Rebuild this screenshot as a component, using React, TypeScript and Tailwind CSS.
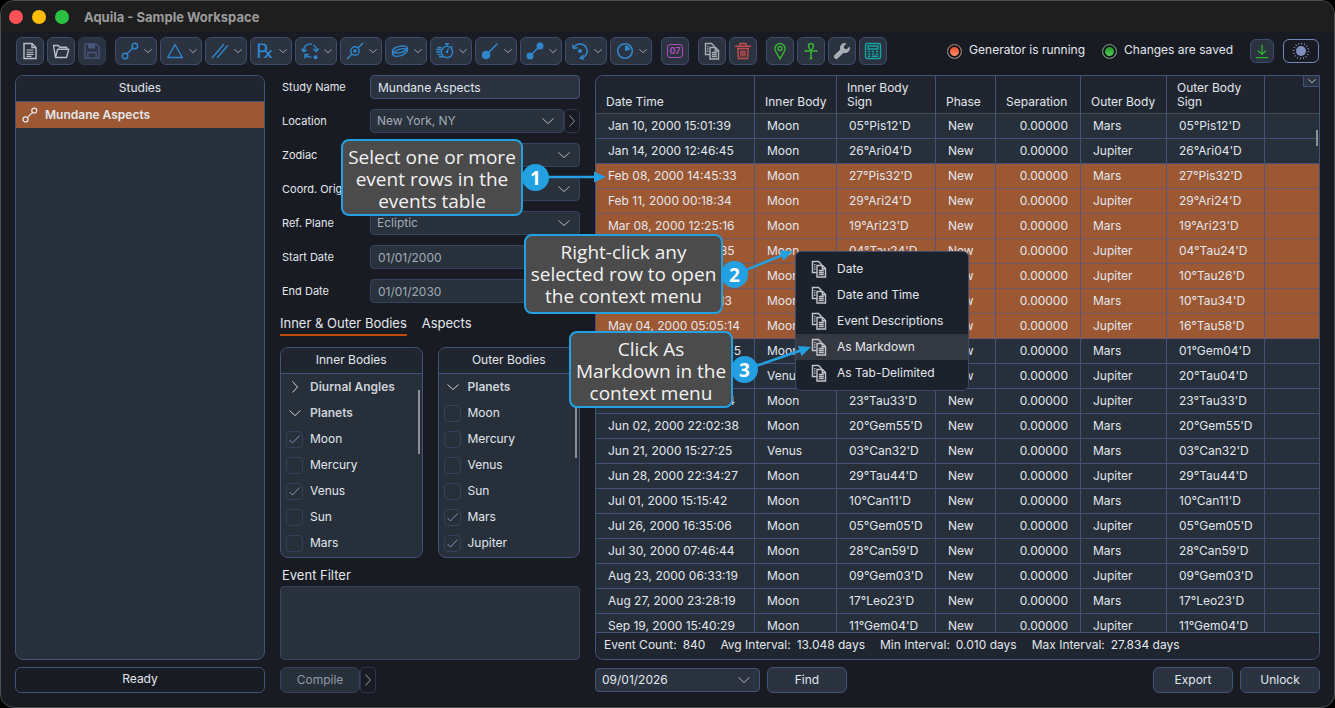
import { useState, type ReactNode } from "react";
import { clsx } from "clsx";

const dropdownTools = [
  "Aspects",
  "Figures",
  "Parallels",
  "Retrogrades",
  "Returns",
  "Stations",
  "Orbits",
  "Timing",
  "Ingress",
  "Conjunctions",
  "Rotation",
  "Phases",
] as const;

type EventRow = [date: string, inner: string, sign: string, outer: string, selected?: boolean];

const events: EventRow[] = [
  ["Jan 10, 2000 15:01:39", "Moon", "05°Pis12'D", "Mars"],
  ["Jan 14, 2000 12:46:45", "Moon", "26°Ari04'D", "Jupiter"],
  ["Feb 08, 2000 14:45:33", "Moon", "27°Pis32'D", "Mars", true],
  ["Feb 11, 2000 00:18:34", "Moon", "29°Ari24'D", "Jupiter", true],
  ["Mar 08, 2000 12:25:16", "Moon", "19°Ari23'D", "Mars", true],
  ["Mar 09, 2000 16:18:35", "Moon", "04°Tau24'D", "Jupiter", true],
  ["Apr 06, 2000 10:11:11", "Moon", "10°Tau26'D", "Jupiter", true],
  ["Apr 06, 2000 10:37:13", "Moon", "10°Tau34'D", "Mars", true],
  ["May 04, 2000 05:05:14", "Moon", "16°Tau58'D", "Jupiter", true],
  ["May 05, 2000 07:45:45", "Moon", "01°Gem04'D", "Mars"],
  ["May 17, 2000 22:31:19", "Venus", "20°Tau04'D", "Jupiter"],
  ["Jun 01, 2000 00:04:14", "Moon", "23°Tau33'D", "Jupiter"],
  ["Jun 02, 2000 22:02:38", "Moon", "20°Gem55'D", "Mars"],
  ["Jun 21, 2000 15:27:25", "Venus", "03°Can32'D", "Mars"],
  ["Jun 28, 2000 22:34:27", "Moon", "29°Tau44'D", "Jupiter"],
  ["Jul 01, 2000 15:15:42", "Moon", "10°Can11'D", "Mars"],
  ["Jul 26, 2000 16:35:06", "Moon", "05°Gem05'D", "Jupiter"],
  ["Jul 30, 2000 07:46:44", "Moon", "28°Can59'D", "Mars"],
  ["Aug 23, 2000 06:33:19", "Moon", "09°Gem03'D", "Jupiter"],
  ["Aug 27, 2000 23:28:19", "Moon", "17°Leo23'D", "Mars"],
  ["Sep 19, 2000 15:40:29", "Moon", "11°Gem04'D", "Jupiter"],
];

const stats = [
  ["Event Count:", "840"],
  ["Avg Interval:", "13.048 days"],
  ["Min Interval:", "0.010 days"],
  ["Max Interval:", "27.834 days"],
];

const menuItems = ["Date", "Date and Time", "Event Descriptions", "As Markdown", "As Tab-Delimited"];

export default function App() {
  const [tab, setTab] = useState("Inner & Outer Bodies");

  return (
    <div className="relative h-screen min-h-[640px] bg-black font-['Inter',sans-serif] text-[12px] leading-4 text-[#e3e7ed]">
      <div className="flex h-full flex-col overflow-hidden rounded-[14px] border border-[#4d4f52] bg-[#181b22]">
        <header className="flex h-[31px] shrink-0 items-center gap-[9px] bg-[#1e1e1e] px-2">
          <span className="h-3.5 w-3.5 rounded-full bg-[#ff5257]" />
          <span className="h-3.5 w-3.5 rounded-full bg-[#fdbc08]" />
          <span className="h-3.5 w-3.5 rounded-full bg-[#2bc145]" />
          <h1 className="ml-1.5 text-[13px] font-bold text-[#9b9b9b]">Aquila - Sample Workspace</h1>
        </header>

        <Toolbar />

        <main className="flex min-h-0 flex-1 gap-[15px] px-3.5 pb-3.5">
          <section className="flex w-[250px] shrink-0 flex-col gap-[7px]">
            <Panel title="Studies" className="flex-1">
              <button
                type="button"
                className="flex h-[26px] w-full items-center gap-[7px] bg-[#9c5733] pl-1.5 font-semibold"
              >
                <Icon name="Aspects" className="h-4 w-4" />
                Mundane Aspects
              </button>
            </Panel>
            <div
              role="status"
              className="flex h-[26px] items-center justify-center rounded-md border border-[#43527a] pb-0.5"
            >
              Ready
            </div>
          </section>

          <section className="flex w-[300px] shrink-0 flex-col">
            <div className="flex flex-col gap-2.5">
              <Field label="Study Name" id="study-name">
                <input
                  id="study-name"
                  defaultValue="Mundane Aspects"
                  className="h-6 w-full rounded-sm border border-[#43527a] bg-[#2a333f] px-[7px] outline-none"
                />
              </Field>
              <Field label="Location" id="location">
                <div className="flex w-full">
                  <Select id="location" value="New York, NY" muted />
                  <button
                    type="button"
                    aria-label="Edit location"
                    className="flex h-6 w-4 shrink-0 items-center justify-center rounded border border-[#2b3549] text-[#8b919b]"
                  >
                    <Chevron className="h-1.5 w-3 -rotate-90" />
                  </button>
                </div>
              </Field>
              <Field label="Zodiac" id="zodiac">
                <Select id="zodiac" value="Tropical" muted />
              </Field>
              <Field label="Coord. Origin" id="origin">
                <Select id="origin" value="Geocentric" muted />
              </Field>
              <Field label="Ref. Plane" id="plane">
                <Select id="plane" value="Ecliptic" muted />
              </Field>
              <Field label="Start Date" id="start-date">
                <DateInput id="start-date" value="01/01/2000" />
              </Field>
              <Field label="End Date" id="end-date">
                <DateInput id="end-date" value="01/01/2030" />
              </Field>
            </div>

            <div role="tablist" className="mt-2.5 mb-[11px] flex gap-[15px]">
              {["Inner & Outer Bodies", "Aspects"].map((name) => (
                <button
                  key={name}
                  type="button"
                  role="tab"
                  aria-selected={tab === name}
                  onClick={() => setTab(name)}
                  className={clsx(
                    "h-[23px] border-b-2 pb-0.5 text-[13px]",
                    tab === name ? "border-[#c04a08]" : "border-transparent",
                  )}
                >
                  {name}
                </button>
              ))}
            </div>

            <div className="grid min-h-0 flex-1 grid-cols-2 gap-[15px]">
              <Panel title="Inner Bodies">
                <Group name="Diurnal Angles" collapsed />
                <Group name="Planets" />
                <BodyRow name="Moon" checked />
                <BodyRow name="Mercury" />
                <BodyRow name="Venus" checked />
                <BodyRow name="Sun" />
                <BodyRow name="Mars" />
                <span className="absolute top-[42px] right-0.5 h-16 w-0.5 bg-[#8d8f90]" />
              </Panel>
              <Panel title="Outer Bodies">
                <Group name="Planets" />
                <BodyRow name="Moon" />
                <BodyRow name="Mercury" />
                <BodyRow name="Venus" />
                <BodyRow name="Sun" />
                <BodyRow name="Mars" checked />
                <BodyRow name="Jupiter" checked />
                <span className="absolute top-[30px] right-0.5 h-20 w-0.5 bg-[#8d8f90]" />
              </Panel>
            </div>

            <label htmlFor="event-filter" className="flex h-7 items-center pt-1.5 pl-0.5 text-[13px]">
              Event Filter
            </label>
            <textarea
              id="event-filter"
              className="h-[74px] resize-none rounded-sm border border-[#35435f] bg-[#28313c] px-2 py-1 outline-none"
            />
            <div className="mt-[7px] flex text-[#9299a3]">
              <button
                type="button"
                className="h-[26px] w-20 rounded-md border border-[#35435a] bg-[#262f3a]"
              >
                Compile
              </button>
              <button
                type="button"
                aria-label="Compile options"
                className="flex h-[26px] w-4 items-center justify-center rounded border border-[#2b3549]"
              >
                <Chevron className="h-1.5 w-3 -rotate-90" />
              </button>
            </div>
          </section>

          <section className="flex min-w-0 flex-1 flex-col gap-[7px]">
            <EventTable />
            <div className="flex h-[26px] items-center gap-[7px]">
              <div className="w-[165px]">
                <Select id="find-date" value="09/01/2026" label="Find date" />
              </div>
              <PushButton>Find</PushButton>
              <div className="ml-auto flex gap-[7px]">
                <PushButton>Export</PushButton>
                <PushButton>Unlock</PushButton>
              </div>
            </div>
          </section>
        </main>
      </div>

      <ContextMenu />

      <Callout number={1} className="top-[139px] left-[341px] w-[182px] pt-[5px] pb-0.5">
        Select one or more
        <br />
        event rows in the
        <br />
        events table
      </Callout>
      <Badge number={1} className="top-[164px] left-[522px]" />
      <Arrow
        className="top-[171px] left-[548px] h-3 w-[58px]"
        viewBox="0 0 58 12"
        path="M0 6h48"
        head="58,6 46,0.5 46,11.5"
      />

      <Callout number={2} className="top-[234px] left-[524px] w-[199px] py-[5px]">
        Right-click any
        <br />
        selected row to open
        <br />
        the context menu
      </Callout>
      <Badge number={2} className="top-[261px] left-[721px]" />
      <Arrow
        className="top-[246px] left-[746px] h-7 w-12"
        viewBox="0 0 48 28"
        path="M0 24L38 8.5"
        head="47,5 33.5,4.5 37.5,14.5"
      />

      <Callout number={3} className="top-[331px] left-[569px] w-[164px] pt-[5px] pb-0.5">
        Click As
        <br />
        Markdown in the
        <br />
        context menu
      </Callout>
      <Badge number={3} className="top-[356px] left-[731px]" />
      <Arrow
        className="top-[342px] left-[756px] h-7 w-14"
        viewBox="0 0 56 28"
        path="M0 24L46 8"
        head="55,5 42,4 45.5,14"
      />
    </div>
  );
}

function Toolbar() {
  return (
    <div className="flex shrink-0 items-center px-[15px] pt-[5px] pb-2.5">
      <div className="flex gap-[3px]">
        <ToolButton name="New" className="border-[#3d4c70] text-[#b9bec6]" />
        <ToolButton name="Open" className="border-[#3d4c70] text-[#b9bec6]" />
        <ToolButton name="Save" className="border-[#2f3a50] text-[#48557c]" />
      </div>
      <div className="ml-[9px] flex gap-[3px] text-[#2f86cc]">
        {dropdownTools.map((name) => (
          <button
            key={name}
            type="button"
            aria-label={name}
            className="flex h-7 w-[42px] items-center justify-between rounded-md border border-[#3d4c70] bg-[#2a333f] pr-1 pl-[5px]"
          >
            {name === "Retrogrades" ? (
              <span className="w-[18px] text-center font-['DejaVu_Sans',sans-serif] text-[20px] leading-5">
                ℞
              </span>
            ) : (
              <Icon name={name} className="h-[18px] w-[18px]" />
            )}
            <Chevron className="h-1 w-2 text-[#9aa0aa]" />
          </button>
        ))}
      </div>
      <button
        type="button"
        aria-label="Calendar"
        className="ml-[9px] flex h-7 w-7 items-center justify-center rounded-md border border-[#3d4c70] bg-[#2a333f] text-[#b04fb4]"
      >
        <span className="flex h-3.5 w-4 items-center justify-center rounded-[3px] border border-current text-[9px] leading-3 font-bold">
          07
        </span>
      </button>
      <div className="ml-[9px] flex gap-[3px]">
        <ToolButton name="Copy" className="border-[#3d4c70] text-[#a9aeb4]" />
        <ToolButton name="Delete" className="border-[#3d4c70] text-[#c64c4c]" />
      </div>
      <div className="ml-[9px] flex gap-[3px]">
        <ToolButton name="Places" className="border-[#3d4c70] text-[#38b035]" />
        <ToolButton name="Ankh" className="border-[#3d4c70] text-[#38b035]" />
        <ToolButton name="Settings" className="border-[#3d4c70] text-[#a9aeb4]" />
        <ToolButton name="Calculator" className="border-[#3d4c70] text-[#16a3a3]" />
      </div>

      <div className="ml-auto flex items-center">
        <Lamp className="from-[#e8380c] to-[#ff9a78]" />
        <span className="ml-[7px] pb-0.5">Generator is running</span>
        <Lamp className="ml-[17px] from-[#0b8a18] to-[#5ad95c]" />
        <span className="ml-[7px] pb-0.5">Changes are saved</span>
        <button
          type="button"
          aria-label="Download"
          className="ml-[17px] flex h-6 w-6 items-center justify-center rounded-md border border-[#3d4c70] bg-[#2a333f] text-[#2fb52c]"
        >
          <Icon name="Download" className="h-4 w-4" />
        </button>
        <button
          type="button"
          aria-label="Toggle theme"
          className="ml-[9px] flex h-6 w-9 items-center justify-center rounded-md border border-[#7486b8] text-[#7f8fc0]"
        >
          <Icon name="Sun" className="h-[18px] w-[18px]" />
        </button>
      </div>
    </div>
  );
}

function ToolButton({ name, className }: { name: string; className: string }) {
  return (
    <button
      type="button"
      aria-label={name}
      className={clsx(
        "flex h-7 w-7 items-center justify-center rounded-md border bg-[#2a333f]",
        className,
      )}
    >
      <Icon name={name} className="h-[18px] w-[18px]" />
    </button>
  );
}

function Lamp({ className }: { className: string }) {
  return (
    <span
      className={clsx(
        "h-[15px] w-[15px] rounded-full border border-[#8a8c90] bg-linear-to-b ring-2 ring-[#10141a] ring-inset",
        className,
      )}
    />
  );
}

function Panel({
  title,
  className,
  children,
}: {
  title: string;
  className?: string;
  children: ReactNode;
}) {
  return (
    <section
      className={clsx(
        "relative min-h-0 overflow-hidden rounded-lg border border-[#43527a] bg-[#262f3a]",
        className,
      )}
    >
      <h2 className="flex h-[26px] items-center justify-center border-b border-[#43527a] bg-[#20262f] pb-0.5">
        {title}
      </h2>
      {children}
    </section>
  );
}

function Field({ label, id, children }: { label: string; id: string; children: ReactNode }) {
  return (
    <div className="flex h-6 items-center">
      <label htmlFor={id} className="w-[90px] shrink-0 pl-0.5 text-[11px] whitespace-nowrap">
        {label}
      </label>
      <div className="min-w-0 flex-1">{children}</div>
    </div>
  );
}

function Select({
  id,
  value,
  muted,
  label,
}: {
  id: string;
  value: string;
  muted?: boolean;
  label?: string;
}) {
  return (
    <div className="relative w-full">
      <select
        id={id}
        aria-label={label}
        className={clsx(
          "block h-6 w-full appearance-none rounded-sm border pl-1.5 outline-none",
          muted
            ? "border-[#35435f] bg-[#28313c] text-[#a4abb5]"
            : "border-[#43527a] bg-[#2a333f] text-[#e3e7ed]",
        )}
      >
        <option>{value}</option>
      </select>
      <Chevron className="pointer-events-none absolute top-[9px] right-2.5 h-1.5 w-3 text-[#b4bac3]" />
    </div>
  );
}

function DateInput({ id, value }: { id: string; value: string }) {
  return (
    <input
      id={id}
      defaultValue={value}
      className="h-6 w-full rounded-sm border border-[#35435f] bg-[#28313c] px-[7px] text-[#a4abb5] outline-none"
    />
  );
}

function Group({ name, collapsed }: { name: string; collapsed?: boolean }) {
  return (
    <button
      type="button"
      aria-expanded={!collapsed}
      className="flex h-[26px] w-full items-center gap-[9px] pl-2 font-semibold text-[#cdd2d9]"
    >
      <Chevron className={clsx("h-1.5 w-3", collapsed && "-rotate-90")} />
      {name}
    </button>
  );
}

function BodyRow({ name, checked }: { name: string; checked?: boolean }) {
  const [on, setOn] = useState(Boolean(checked));

  return (
    <label className="flex h-[26px] items-center gap-[7px] pl-[5px]">
      <span className="relative h-[17px] w-[17px]">
        <input
          type="checkbox"
          checked={on}
          onChange={(event) => setOn(event.target.checked)}
          className="block h-[17px] w-[17px] appearance-none rounded-sm border border-[#35415c]"
        />
        {on ? (
          <svg
            viewBox="0 0 17 17"
            className="pointer-events-none absolute inset-0"
            fill="none"
            stroke="#8291b9"
            aria-hidden="true"
          >
            <path d="M3.5 9l3 3 7-7.5" />
          </svg>
        ) : null}
      </span>
      {name}
    </label>
  );
}

function PushButton({ children }: { children: ReactNode }) {
  return (
    <button
      type="button"
      className="h-[26px] w-20 rounded-md border border-[#43527a] bg-[#2a333f]"
    >
      {children}
    </button>
  );
}

function EventTable() {
  const head =
    "border-r border-b border-r-[#43527a] border-b-[#484c55] px-2.5 pb-1 align-bottom font-normal leading-[14px] whitespace-nowrap";

  return (
    <div className="relative flex min-h-0 flex-1 flex-col overflow-hidden rounded-l-lg rounded-br-lg border border-[#43527a] bg-[#262f3a]">
      <div className="min-h-0 flex-1 overflow-hidden">
        <table className="w-full table-fixed border-separate border-spacing-0 text-left">
          <colgroup>
            <col className="w-[159px]" />
            <col className="w-[82px]" />
            <col className="w-[99px]" />
            <col className="w-[60px]" />
            <col className="w-[85px]" />
            <col className="w-[86px]" />
            <col className="w-[98px]" />
            <col />
          </colgroup>
          <thead>
            <tr className="h-[38px] bg-[#20262f]">
              <th className={head}>Date Time</th>
              <th className={head}>Inner Body</th>
              <th className={head}>
                Inner Body
                <br />
                Sign
              </th>
              <th className={head}>Phase</th>
              <th className={head}>Separation</th>
              <th className={head}>Outer Body</th>
              <th className={head}>
                Outer Body
                <br />
                Sign
              </th>
              <th className="border-b border-[#484c55]" />
            </tr>
          </thead>
          <tbody>
            {events.map(([date, inner, sign, outer, selected]) => {
              const cell = clsx(
                "border-r border-b px-3 whitespace-nowrap",
                selected ? "border-r-[#5a5775] border-b-[#6d5a66]" : "border-[#43527a]",
              );

              return (
                <tr key={date} className={clsx("h-[25px]", selected && "bg-[#9c5733]")}>
                  <td className={cell}>{date}</td>
                  <td className={cell}>{inner}</td>
                  <td className={cell}>{sign}</td>
                  <td className={cell}>New</td>
                  <td className={clsx(cell, "text-right")}>0.00000</td>
                  <td className={cell}>{outer}</td>
                  <td className={cell}>{sign}</td>
                  <td className={clsx(cell, "border-r-0")} />
                </tr>
              );
            })}
          </tbody>
        </table>
      </div>
      <div className="flex h-[27px] shrink-0 items-center gap-[15px] border-t border-[#43527a] bg-[#20262f] px-2 pb-0.5">
        {stats.map(([name, value]) => (
          <span key={name} className="flex gap-1.5">
            <span>{name}</span>
            <span>{value}</span>
          </span>
        ))}
      </div>
      <button
        type="button"
        aria-label="Choose columns"
        className="absolute top-0 right-0 flex h-[11px] w-4 items-center justify-center border-b border-l border-[#43527a] bg-[#2a333f] text-[#b4bac3]"
      >
        <Chevron className="h-1 w-2" />
      </button>
      <span className="absolute top-[54px] right-px h-4 w-0.5 bg-[#8d8f90]" />
    </div>
  );
}

function ContextMenu() {
  return (
    <div
      role="menu"
      className="absolute top-[251px] left-[795px] w-[174px] rounded-md border border-[#3d4a6b] bg-[#1c222b] py-1"
    >
      {menuItems.map((item) => (
        <button
          key={item}
          type="button"
          role="menuitem"
          className={clsx(
            "flex h-[26px] w-full items-center gap-[9px] pl-3.5",
            item === "As Markdown" && "bg-[#343941]",
          )}
        >
          <Icon name="Copy" className="h-[18px] w-[18px] text-[#c3c7cd]" />
          {item}
        </button>
      ))}
    </div>
  );
}

function Callout({
  number,
  className,
  children,
}: {
  number: number;
  className: string;
  children: ReactNode;
}) {
  return (
    <p
      aria-label={`Step ${number}`}
      className={clsx(
        "absolute rounded-lg border-2 border-[#22a0e2] bg-[#4b4b4b] text-center font-['Open_Sans','Noto_Sans',sans-serif] text-[19px] leading-[22px] whitespace-nowrap text-[#f2f2f2]",
        className,
      )}
    >
      {children}
    </p>
  );
}

function Badge({ number, className }: { number: number; className: string }) {
  return (
    <span
      className={clsx(
        "absolute flex h-[27px] w-[27px] items-center justify-center rounded-full bg-[#22a0e2] font-['Open_Sans','Noto_Sans',sans-serif] text-[19px] leading-6 font-bold text-white",
        className,
      )}
    >
      {number}
    </span>
  );
}

function Arrow({
  className,
  viewBox,
  path,
  head,
}: {
  className: string;
  viewBox: string;
  path: string;
  head: string;
}) {
  return (
    <svg
      viewBox={viewBox}
      className={clsx("pointer-events-none absolute", className)}
      aria-hidden="true"
    >
      <path d={path} stroke="#22a0e2" strokeWidth="2.5" />
      <polygon points={head} fill="#22a0e2" />
    </svg>
  );
}

function Chevron({ className }: { className: string }) {
  return (
    <svg viewBox="0 0 12 6" className={className} fill="none" stroke="currentColor" aria-hidden="true">
      <path d="M0.5 0.5L6 5.5l5.5-5" vectorEffect="non-scaling-stroke" />
    </svg>
  );
}

function Icon({ name, className }: { name: string; className: string }) {
  return (
    <svg
      viewBox="0 0 18 18"
      className={clsx("shrink-0", className)}
      fill="none"
      stroke="currentColor"
      strokeWidth="1.4"
      aria-hidden="true"
    >
      {icons[name]}
    </svg>
  );
}

const solid = { fill: "currentColor", stroke: "none" };

const icons: Record<string, ReactNode> = {
  New: (
    <>
      <path d="M3 1.5h8l4 4v11H3zM11 1.5v4h4" />
      <path d="M5.5 8h7M5.5 10.2h7M5.5 12.4h7M5.5 14.4h5" strokeWidth="1.1" />
    </>
  ),
  Open: (
    <path
      d="M3.5 15.5l-2-12h4.800l1.4 1.800h7v2M3.5 15.500h11l2.300-8.200H5.600z"
      strokeLinejoin="round"
    />
  ),
  Save: (
    <>
      <path d="M2 2h11l3 3v11H2z" strokeLinejoin="round" />
      <path d="M5 2h7v4.500H5z" {...solid} />
      <path d="M4.800 16v-5.500h8.400V16" />
    </>
  ),
  Aspects: (
    <>
      <circle cx="4" cy="14" r="2.8" />
      <circle cx="13.8" cy="4" r="2.8" />
      <path d="M5.9 12l6-6" />
    </>
  ),
  Figures: <path d="M9 2.500l7.300 13H1.700z" strokeLinejoin="round" />,
  Parallels: <path d="M1.500 15.500l11-13M6.500 15.500l10-11.700" strokeLinecap="round" />,
  Returns: (
    <>
      <path d="M2.800 9A6.200 6.200 0 0 1 11 2.300M12.500 3A6.200 6.200 0 0 1 15.200 8.500M10.500 14.800A6.200 6.200 0 0 1 4.200 13" />
      <path d="M0.500 6.800l2.300 3 3-2.300M12.300 7l3 2.500 2.300-3M4 16.500v-4h4" />
      <circle cx="14.500" cy="15.300" r="2" {...solid} />
    </>
  ),
  Stations: (
    <>
      <path d="M1 17l4.800-4.800M12.200 5.800L17 1" />
      <circle cx="9" cy="9" r="4.200" />
      <circle cx="9" cy="9" r="1.800" {...solid} />
    </>
  ),
  Orbits: (
    <>
      <ellipse cx="9" cy="7.500" rx="7.500" ry="3.200" transform="rotate(-12 9 7.500)" />
      <ellipse cx="9" cy="10.500" rx="7.500" ry="3.200" transform="rotate(-18 9 10.500)" />
      <path d="M1.600 9v3.800M16.400 5.500v3.200" />
    </>
  ),
  Timing: (
    <>
      <circle cx="11" cy="10" r="5.600" />
      <path d="M9 1.800h4M11 2v2.400M15.200 4.300l1.200 1.200M11 10l1.500-3.500M0 7.500h5M1.500 5.500h4M0 10h4.500M1.500 12.500h4M3 14.700h4" />
      <circle cx="11" cy="10" r="1.200" {...solid} />
    </>
  ),
  Ingress: (
    <>
      <circle cx="5" cy="13" r="4.300" {...solid} />
      <path d="M6 12L16.500 1.500" strokeWidth="1.700" />
    </>
  ),
  Conjunctions: (
    <>
      <circle cx="4" cy="14" r="3.500" {...solid} />
      <circle cx="14" cy="4" r="3.500" {...solid} />
      <path d="M4 14L14 4" strokeWidth="1.600" />
    </>
  ),
  Rotation: (
    <>
      <path d="M3 5.500A7 7 0 1 1 9.500 16" strokeWidth="1.600" />
      <path d="M1.500 2.500l1 4 4-0.800M12.300 13l-3 3 3.500 1.500" />
      <circle cx="9" cy="9" r="2" {...solid} />
    </>
  ),
  Phases: (
    <>
      <circle cx="9" cy="9" r="7.300" strokeWidth="1.600" />
      <path d="M9 9V3.500A5.500 5.500 0 0 1 14.300 7.800z" {...solid} />
    </>
  ),
  Copy: (
    <>
      <path d="M7 12.500H2.500v-11h6l2.500 2.500v1" />
      <path d="M4.800 4v7" strokeDasharray="1.300 1" />
      <path d="M7 5.500h5.500l3 3v8.500H7z" />
      <path d="M12.300 5.500v3.200h3.200M8.800 10.500h5M8.800 12.500h5M8.800 14.500h5" />
    </>
  ),
  Delete: (
    <>
      <path d="M1 4.300h16M6 4V1.500h6V4M3 6.500h12M3.800 6.500l0.700 10h9l0.700-10" />
      <path d="M7 8.500v6M9 8.500v6M11 8.500v6" />
    </>
  ),
  Places: (
    <>
      <path d="M9 17C7.500 13.500 4 10 4 6.500a5 5 0 0 1 10 0C14 10 10.500 13.500 9 17z" />
      <circle cx="9" cy="6.500" r="2" />
    </>
  ),
  Ankh: (
    <path
      d="M9 9C7 6.500 6.500 5.500 6.500 4a2.500 2.500 0 0 1 5 0C11.500 5.500 11 6.500 9 9zM3.500 9h11M9 9v8M3.500 8v2M14.500 8v2M7.500 16.500h3"
      strokeWidth="1.600"
    />
  ),
  Settings: (
    <path
      d="M16.600 4.400l-2.900 2.800-2.400-.6-.6-2.400 2.800-2.800a4.800 4.800 0 0 0-6.300 6L1.600 13a2.200 2.200 0 0 0 3.300 3.300l5.700-5.600a4.800 4.800 0 0 0 6-6.300z"
      {...solid}
    />
  ),
  Calculator: (
    <>
      <rect x="1.500" y="1.500" width="15" height="15" rx="1.500" />
      <path d="M4 4h10v3H4z" />
      <path d="M3.800 9.500h2.500M7.800 9.500h2.500M11.800 9.500h2.500M3.800 12h2.500M7.800 12h2.500M11.800 12h2.500M3.800 14.300h2.500M7.800 14.300h6.500" />
    </>
  ),
  Download: <path d="M9 2v10.500M4.500 8.500L9 12.800l4.500-4.300M2 16.500h14" />,
  Sun: (
    <>
      <circle cx="9" cy="9" r="5" {...solid} />
      <circle cx="9" cy="9" r="7.500" strokeWidth="1.800" strokeDasharray="0.900 2.045" />
    </>
  ),
};
